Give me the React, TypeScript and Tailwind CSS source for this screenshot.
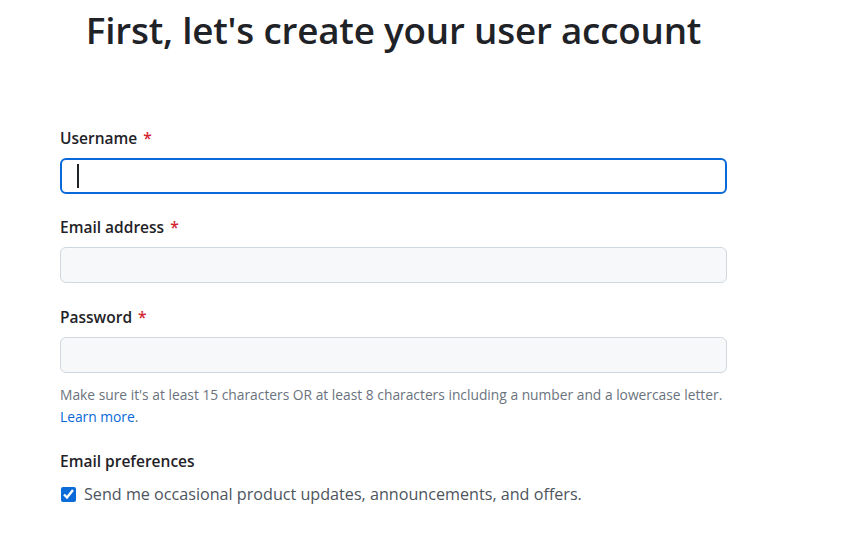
import React from 'react';

const font = { fontFamily: '"Open Sans", "Noto Sans", sans-serif' };

function Label({ children }: { children: React.ReactNode }) {
    return (
        <label className="block text-[15.5px] font-semibold text-[#1f2328] leading-[22px] mb-[9px]">
            {children} <span className="ml-[2px] text-[#d1242f]">*</span>
        </label>
    );
}

export default function App() {
    return (
        <div className="min-h-[538px] bg-white" style={font}>
            <div className="w-[667px] ml-[60px] pt-[6px]">
                <h1 className="text-center text-[36.8px] font-semibold text-[#1f2328] leading-[48px] tracking-[-0.2px]">
                    First, let's create your user account
                </h1>

                <div className="mt-[73px]">
                    <Label>Username</Label>
                    <div className="relative">
                        <input
                            type="text"
                            className="w-full h-[36px] rounded-[6px] border-2 border-[#0969da] bg-white px-3 outline-none"
                        />
                        <span className="absolute left-[17px] top-[6px] w-[1.5px] h-[24px] bg-[#1f2328]" />
                    </div>
                </div>

                <div className="mt-[22px]">
                    <Label>Email address</Label>
                    <input
                        type="email"
                        className="w-full h-[36px] rounded-[6px] border border-[#d0d7de] bg-[#f6f8fa] px-3 outline-none"
                    />
                </div>

                <div className="mt-[23px]">
                    <Label>Password</Label>
                    <input
                        type="password"
                        className="w-full h-[36px] rounded-[6px] border border-[#d0d7de] bg-[#f6f8fa] px-3 outline-none"
                    />
                    <p className="mt-[11px] text-[13.8px] leading-[22px] text-[#6a737d]">
                        Make sure it's at least 15 characters OR at least 8 characters including a number and a lowercase letter.
                        <br />
                        <a className="text-[#0969da]">Learn more</a>.
                    </p>
                </div>

                <div className="mt-[22px]">
                    <div className="text-[15.5px] font-semibold text-[#1f2328] leading-[22px]">Email preferences</div>
                    <label className="mt-[11px] flex items-center gap-[8px] leading-[22px]">
                        <input type="checkbox" defaultChecked className="w-[15px] h-[15px] ml-[1px] accent-[#0b6bd9]" />
                        <span className="text-[16.15px] text-[#4d555e]">Send me occasional product updates, announcements, and offers.</span>
                    </label>
                </div>
            </div>
        </div>
    );
}
